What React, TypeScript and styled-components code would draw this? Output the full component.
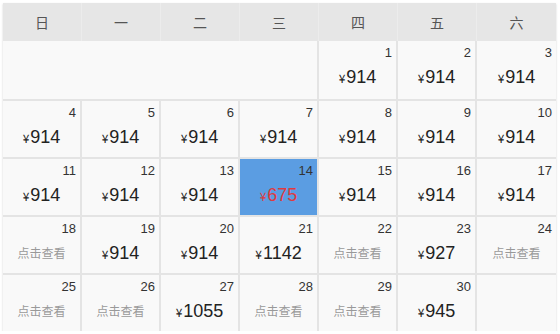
import styled, { createGlobalStyle, css } from 'styled-components';

type Day = {
    date: number;
    price?: number;
    active?: boolean;
};

const weekdays = ['日', '一', '二', '三', '四', '五', '六'];

const prices: Record<number, number | undefined> = {
    14: 675,
    18: undefined,
    21: 1142,
    22: undefined,
    23: 927,
    24: undefined,
    25: undefined,
    26: undefined,
    27: 1055,
    28: undefined,
    29: undefined,
    30: 945,
};

const days: Day[] = Array.from({ length: 30 }, (_, i) => {
    const date = i + 1;
    const price = date in prices ? prices[date] : 914;
    return { date, price, active: date === 14 };
});

const offset = 4;

const App = (): JSX.Element => {
    return (
        <>
            <GlobalStyle />
            <Calendar>
                <WeekHeader>
                    {weekdays.map(w => (
                        <WeekLabel key={w}>{w}</WeekLabel>
                    ))}
                </WeekHeader>
                <DayGrid>
                    <Blank span={offset} />
                    {days.map((d, i) => {
                        const col = (i + offset) % 7;
                        const row = Math.floor((i + offset) / 7);
                        return (
                            <DayCell
                                key={d.date}
                                active={d.active}
                                lastCol={col === 6}
                                lastRow={row === 4}
                            >
                                <DateNum>{d.date}</DateNum>
                                {d.price !== undefined ? (
                                    <Price active={d.active}>
                                        <Yen>¥</Yen>
                                        <Amount>{d.price}</Amount>
                                    </Price>
                                ) : (
                                    <Lookup>点击查看</Lookup>
                                )}
                            </DayCell>
                        );
                    })}
                    <Blank span={1} />
                </DayGrid>
            </Calendar>
        </>
    );
};

const GlobalStyle = createGlobalStyle`
    body {
        margin: 0;
        background: #fff;
        font-family: "Liberation Sans", "Noto Sans CJK SC", sans-serif;
    }
`;

const Calendar = styled.div`
    margin: 3px 0 0 3px;
    width: 553px;
    background: #f9f9f9;
    box-shadow: 0 1px 2px rgba(0, 0, 0, 0.18);
`;

const WeekHeader = styled.div`
    display: grid;
    grid-template-columns: repeat(7, 1fr);
    height: 38px;
    background: #e6e6e6;
`;

const WeekLabel = styled.div`
    display: flex;
    align-items: center;
    justify-content: center;
    font-family: "Noto Sans CJK SC", sans-serif;
    font-size: 14px;
    color: #555;
    border-right: 1px solid #ececec;
    &:last-child {
        border-right: none;
    }
`;

const DayGrid = styled.div`
    display: grid;
    grid-template-columns: repeat(7, 1fr);
    grid-template-rows: 60px repeat(3, 58px) 56px;
`;

const Blank = styled.div<{ span: number }>`
    grid-column: span ${p => p.span};
    border-bottom: ${p => (p.span > 1 ? '2px solid #e4e4e4' : 'none')};
    border-right: ${p => (p.span > 1 ? '2px solid #e4e4e4' : 'none')};
`;

const DayCell = styled.div<{ active?: boolean; lastCol: boolean; lastRow: boolean }>`
    display: flex;
    flex-direction: column;
    padding: 4px 4px 0;
    box-sizing: border-box;
    background: ${p => (p.active ? '#5b9de2' : 'transparent')};
    border-right: ${p => (p.lastCol ? 'none' : '2px solid #e4e4e4')};
    border-bottom: ${p => (p.lastRow ? 'none' : '2px solid #e4e4e4')};
`;

const DateNum = styled.div`
    align-self: flex-end;
    font-size: 13px;
    line-height: 15px;
    color: #333;
`;

const Price = styled.div<{ active?: boolean }>`
    display: flex;
    align-items: baseline;
    justify-content: center;
    margin-top: 5px;
    height: 24px;
    color: #222;
    ${p => p.active && css`
        color: #e0393e;
    `}
`;

const Yen = styled.span`
    font-family: "Noto Sans CJK SC", sans-serif;
    font-size: 12px;
    margin-right: 1px;
`;

const Amount = styled.span`
    font-size: 18px;
    line-height: 24px;
`;

const Lookup = styled.div`
    margin-top: 8px;
    text-align: center;
    font-family: "Noto Sans CJK SC", sans-serif;
    font-size: 12px;
    line-height: 17px;
    color: #999;
`;

export default App;
